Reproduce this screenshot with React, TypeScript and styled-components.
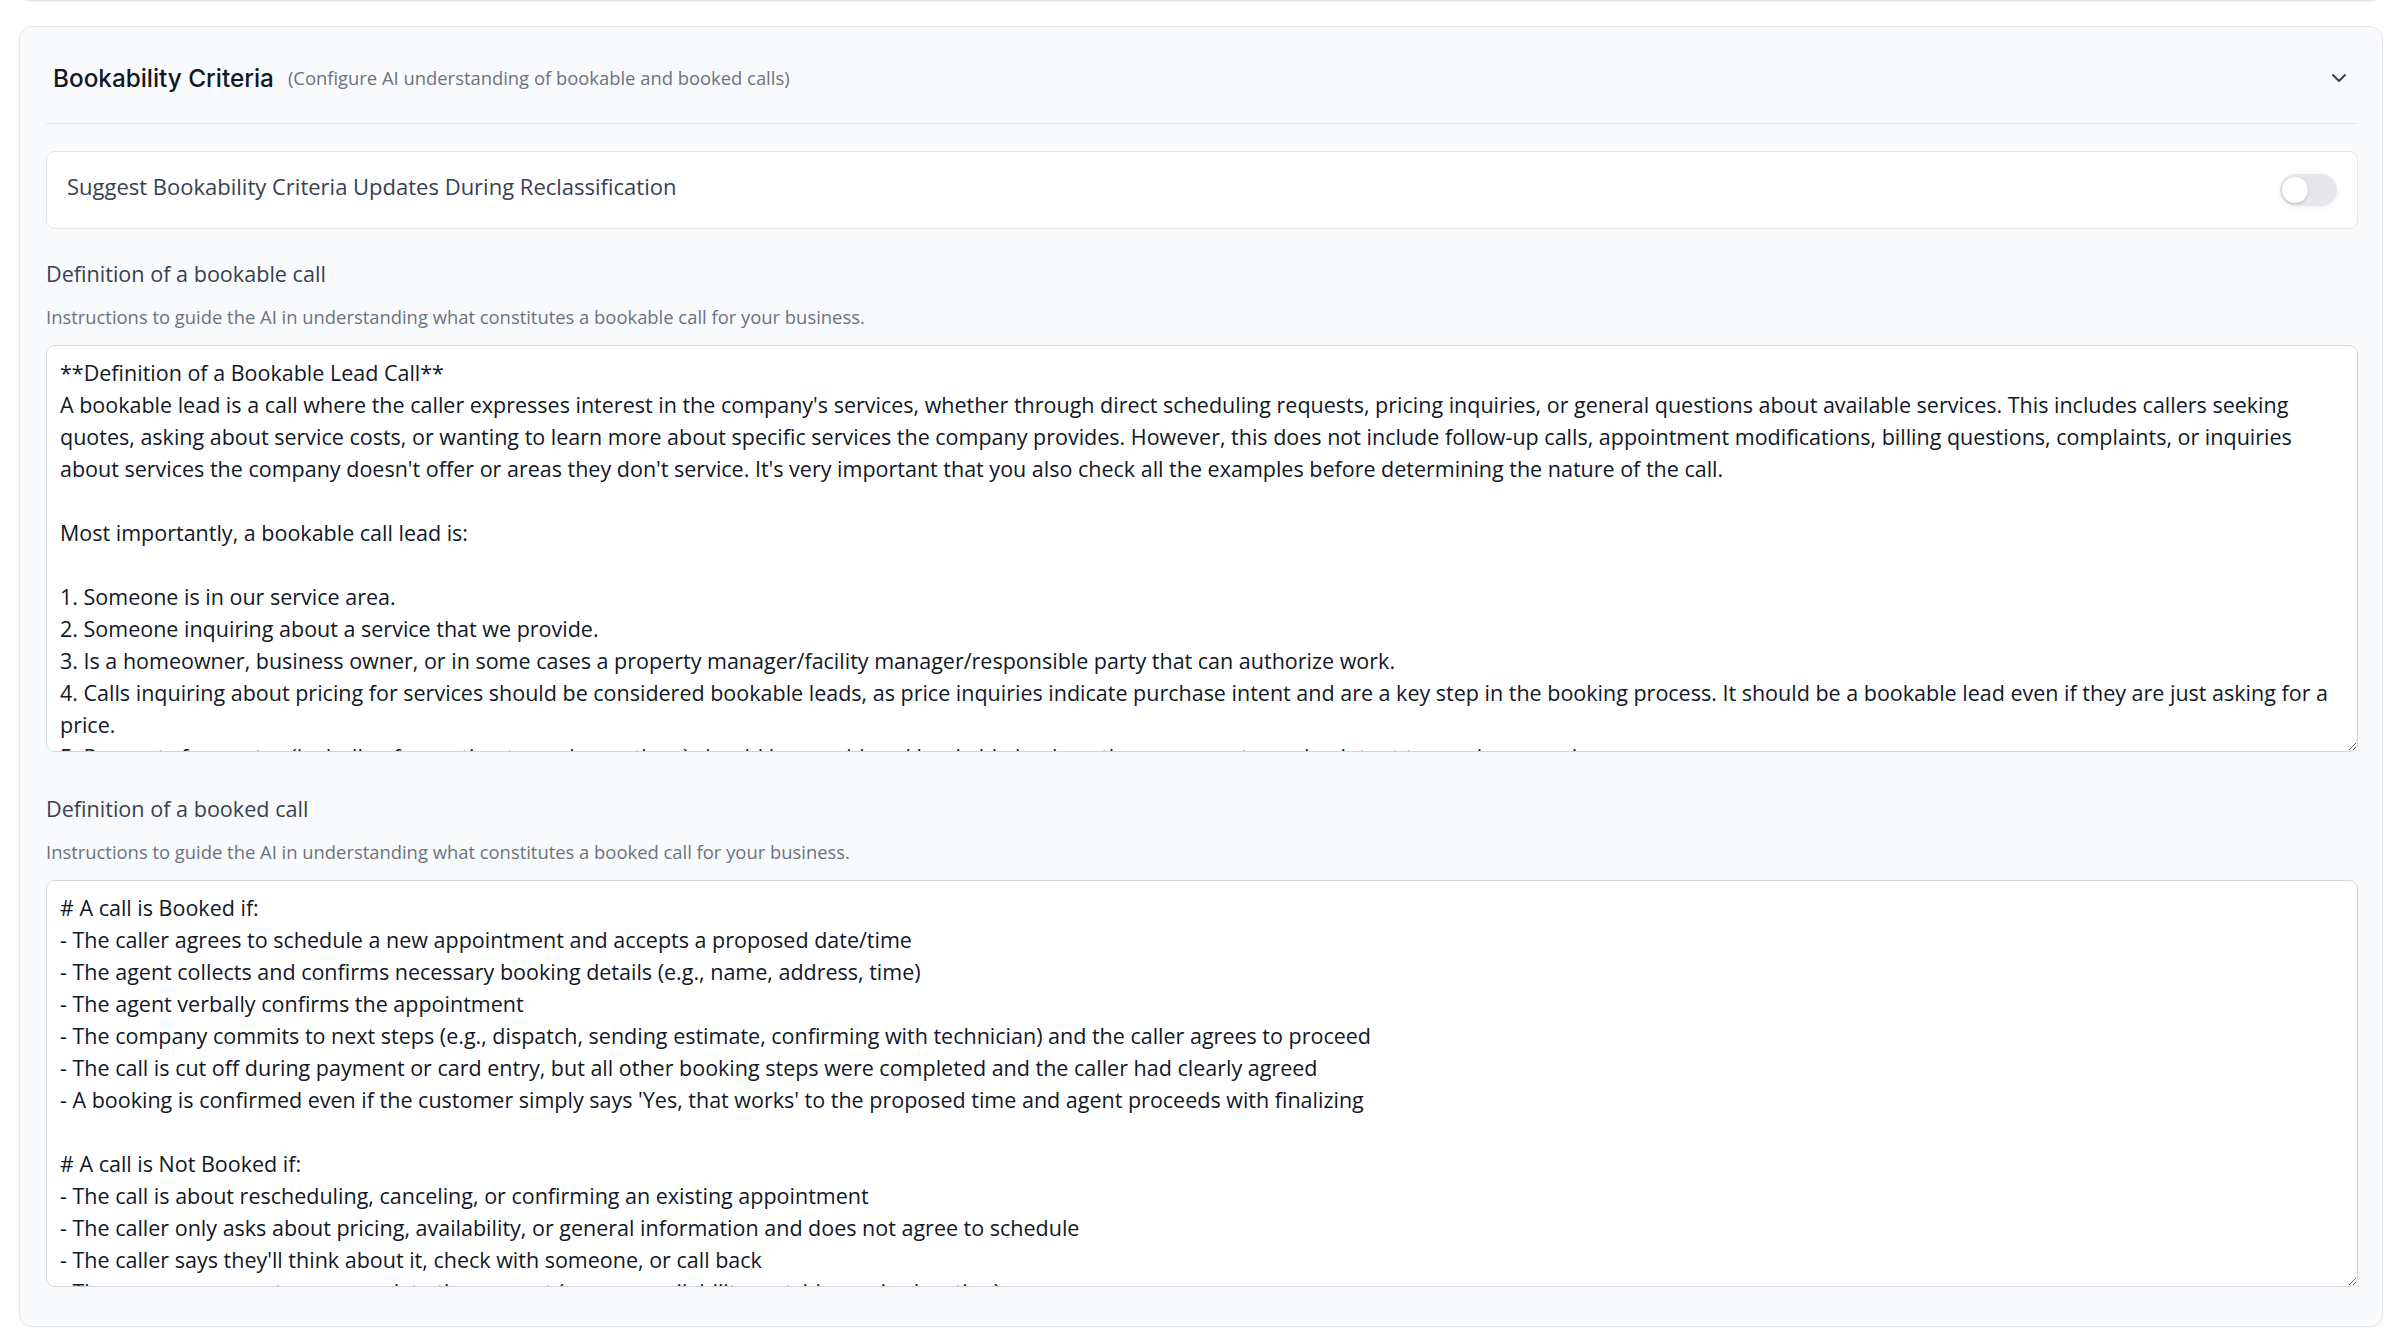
import React, { useState } from "react";
import styled, { createGlobalStyle } from "styled-components";
import { ChevronDown } from "lucide-react";

const GlobalStyle = createGlobalStyle`
  * { box-sizing: border-box; }
  html, body { margin: 0; padding: 0; background: #ffffff; }
  body {
    font-family: "Open Sans", "Noto Sans", sans-serif;
    color: #111827;
    -webkit-font-smoothing: antialiased;
  }
`;

const Page = styled.div`
  padding: 0 19px 8px;
`;

const PreviousCard = styled.div`
  height: 40px;
  margin: -40px 0 0;
  background: #ffffff;
  border-radius: 12px;
  box-shadow: 0 1px 3px rgba(0, 0, 0, 0.09), 0 1px 2px rgba(0, 0, 0, 0.06);
`;

const Card = styled.section`
  margin-top: 26px;
  background: #f9fafb;
  border: 1px solid #e5e7eb;
  border-radius: 13px;
  box-shadow: 0 1px 2px rgba(0, 0, 0, 0.04);
  padding: 26px 24px 39px 26px;
`;

const Header = styled.button`
  width: 100%;
  display: flex;
  align-items: center;
  justify-content: space-between;
  background: transparent;
  border: none;
  padding: 0 7px;
  height: 50px;
  cursor: pointer;
  font-family: inherit;
`;

const TitleGroup = styled.div`
  display: flex;
  align-items: center;
  gap: 14px;
`;

const Title = styled.h2`
  margin: 0;
  font-family: "Inter", "Open Sans", sans-serif;
  font-size: 24.3px;
  font-weight: 500;
  color: #111827;
  line-height: 32px;
`;

const Subtitle = styled.span`
  font-size: 18.4px;
  color: #6b7280;
  line-height: 28px;
`;

const Divider = styled.hr`
  margin: 20px 0 27px;
  border: none;
  border-top: 1px solid #e5e7eb;
`;

const ToggleRow = styled.div`
  display: flex;
  align-items: center;
  justify-content: space-between;
  height: 78px;
  padding: 0 20px;
  background: #ffffff;
  border: 1px solid #e5e7eb;
  border-radius: 9px;
`;

const ToggleLabel = styled.span`
  font-size: 22px;
  color: #374151;
  line-height: 32px;
  margin-top: -9px;
`;

const Switch = styled.button<{ $on: boolean }>`
  position: relative;
  width: 57px;
  height: 32px;
  border: none;
  border-radius: 16px;
  padding: 0;
  cursor: pointer;
  background: ${(p) => (p.$on ? "#2563eb" : "#e5e7eb")};
  box-shadow: 0 2px 6px rgba(0, 0, 0, 0.06);
`;

const Knob = styled.span<{ $on: boolean }>`
  position: absolute;
  top: 3px;
  left: ${(p) => (p.$on ? "28px" : "2px")};
  width: 26px;
  height: 26px;
  border-radius: 50%;
  background: #ffffff;
  box-shadow: 0 1px 3px rgba(0, 0, 0, 0.15), 0 1px 2px rgba(0, 0, 0, 0.08);
`;

const Field = styled.div<{ $gapTop: number }>`
  display: flex;
  flex-direction: column;
  margin-top: ${(p) => p.$gapTop}px;
`;

const FieldLabel = styled.label`
  font-size: 21.6px;
  line-height: 32px;
  color: #374151;
`;

const FieldHint = styled.p`
  margin: 13px 0 14px;
  font-size: 18.4px;
  line-height: 28px;
  color: #6b7280;
`;

const TextArea = styled.textarea`
  display: block;
  width: 100%;
  height: 407px;
  padding: 11px 13px;
  border: 1px solid #d1d5db;
  border-radius: 9px;
  background: #ffffff;
  font-family: "Open Sans", "Noto Sans", sans-serif;
  font-size: 21.5px;
  line-height: 32px;
  color: #111827;
  resize: vertical;
  scrollbar-width: none;
  outline: none;
  &::-webkit-scrollbar { display: none; }
`;

const bookableText = `**Definition of a Bookable Lead Call**
A bookable lead is a call where the caller expresses interest in the company's services, whether through direct scheduling requests, pricing inquiries, or general questions about available services. This includes callers seeking quotes, asking about service costs, or wanting to learn more about specific services the company provides. However, this does not include follow-up calls, appointment modifications, billing questions, complaints, or inquiries about services the company doesn't offer or areas they don't service. It's very important that you also check all the examples before determining the nature of the call.

Most importantly, a bookable call lead is:

1. Someone is in our service area.
2. Someone inquiring about a service that we provide.
3. Is a homeowner, business owner, or in some cases a property manager/facility manager/responsible party that can authorize work.
4. Calls inquiring about pricing for services should be considered bookable leads, as price inquiries indicate purchase intent and are a key step in the booking process. It should be a bookable lead even if they are just asking for a price.
5. Requests for quotes (including free estimates or inspections) should be considered bookable leads as they represent genuine intent to purchase services.
6. Callers who want to book, schedule, or reschedule a first-time service visit are bookable leads.`;

const bookedText = `# A call is Booked if:
- The caller agrees to schedule a new appointment and accepts a proposed date/time
- The agent collects and confirms necessary booking details (e.g., name, address, time)
- The agent verbally confirms the appointment
- The company commits to next steps (e.g., dispatch, sending estimate, confirming with technician) and the caller agrees to proceed
- The call is cut off during payment or card entry, but all other booking steps were completed and the caller had clearly agreed
- A booking is confirmed even if the customer simply says 'Yes, that works' to the proposed time and agent proceeds with finalizing

# A call is Not Booked if:
- The call is about rescheduling, canceling, or confirming an existing appointment
- The caller only asks about pricing, availability, or general information and does not agree to schedule
- The caller says they'll think about it, check with someone, or call back
- The company cannot accommodate the request (e.g., no availability, outside service location)
- The call ends before any appointment time is agreed upon`;

export default function App() {
  const [suggest, setSuggest] = useState(false);
  return (
    <>
      <GlobalStyle />
      <Page>
        <PreviousCard />
        <Card>
          <Header type="button">
            <TitleGroup>
              <Title>Bookability Criteria</Title>
              <Subtitle>(Configure AI understanding of bookable and booked calls)</Subtitle>
            </TitleGroup>
            <ChevronDown size={24} strokeWidth={2} color="#374151" />
          </Header>
          <Divider />
          <ToggleRow>
            <ToggleLabel>Suggest Bookability Criteria Updates During Reclassification</ToggleLabel>
            <Switch type="button" $on={suggest} onClick={() => setSuggest(!suggest)} aria-pressed={suggest}>
              <Knob $on={suggest} />
            </Switch>
          </ToggleRow>
          <Field $gapTop={29}>
            <FieldLabel>Definition of a bookable call</FieldLabel>
            <FieldHint>Instructions to guide the AI in understanding what constitutes a bookable call for your business.</FieldHint>
            <TextArea defaultValue={bookableText} spellCheck={false} />
          </Field>
          <Field $gapTop={41}>
            <FieldLabel>Definition of a booked call</FieldLabel>
            <FieldHint>Instructions to guide the AI in understanding what constitutes a booked call for your business.</FieldHint>
            <TextArea defaultValue={bookedText} spellCheck={false} />
          </Field>
        </Card>
      </Page>
    </>
  );
}
